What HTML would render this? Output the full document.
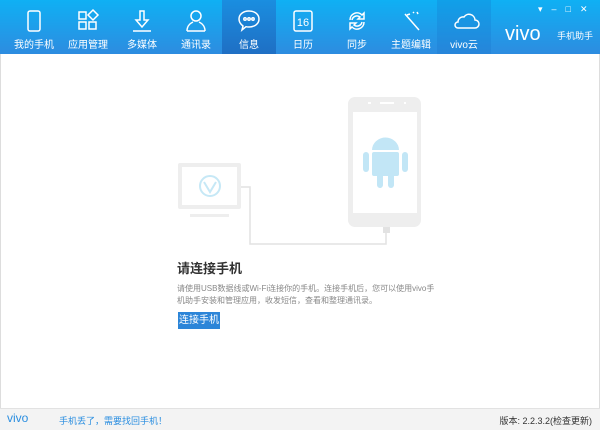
<!DOCTYPE html><html><head><meta charset="utf-8"><style>
body{margin:0;width:600px;height:429px;overflow:hidden;font-family:"Liberation Sans","Noto Sans CJK SC",sans-serif;background:#fff;position:relative}
.hd{position:absolute;left:0;top:0;width:600px;height:54px;background:linear-gradient(#0fb0f4,#2d8ce0)}
.t{position:absolute;top:0;width:54px;height:54px;text-align:center;color:#fff;font-size:10px}
.t span{position:absolute;left:0;right:0;top:36px}
.t svg{position:absolute;left:15px;top:8px}
.act{background:linear-gradient(#1a8ee0,#1f6fc4)}
.act2{background:rgba(20,110,200,0.25)}
.body{position:absolute;left:0;top:54px;width:598px;height:354px;border:1px solid #ddd;border-top:none}
.ft{position:absolute;left:0;top:408px;width:600px;height:21px;background:#f3f3f3;border-top:1px solid #e2e2e2;font-size:9px}
</style></head><body>
<div class="hd">
<div class="t" style="left:7px"><svg width="24" height="26" viewBox="0 0 24 26" fill="none" stroke="#fff" stroke-width="1.5"><rect x="6" y="3" width="12" height="20" rx="2"/></svg><span>我的手机</span></div>
<div class="t" style="left:61px"><svg width="24" height="26" viewBox="0 0 24 26" fill="none" stroke="#fff" stroke-width="1.5"><rect x="3" y="4" width="7" height="7"/><path d="M17 2l5 5-5 5-5-5z"/><rect x="3" y="14" width="7" height="7"/><rect x="13" y="14" width="7" height="7"/></svg><span>应用管理</span></div>
<div class="t" style="left:115px"><svg width="24" height="26" viewBox="0 0 24 26" fill="none" stroke="#fff" stroke-width="1.5"><path d="M10 3h4v9h4l-6 7-6-7h4z"/><path d="M3 23h18"/></svg><span>多媒体</span></div>
<div class="t" style="left:169px"><svg width="24" height="26" viewBox="0 0 24 26" fill="none" stroke="#fff" stroke-width="1.5"><circle cx="12" cy="8" r="5"/><path d="M3 23c0-6 4-8 6-9M21 23c0-6-4-8-6-9M3 23h18"/></svg><span>通讯录</span></div>
<div class="t act" style="left:222px"><svg width="24" height="26" viewBox="0 0 24 26" fill="none" stroke="#fff" stroke-width="1.5"><path d="M12 3c6 0 10 3.5 10 8s-4 8-10 8c-1 0-2 0-3-.3L5 22l1-4c-2-1.5-4-4-4-7 0-4.5 4-8 10-8z"/><circle cx="8" cy="11" r="1.2"/><circle cx="12" cy="11" r="1.2"/><circle cx="16" cy="11" r="1.2"/></svg><span>信息</span></div>
<div class="t" style="left:276px"><svg width="24" height="26" viewBox="0 0 24 26" fill="none" stroke="#fff" stroke-width="1.5"><rect x="3" y="3" width="18" height="20" rx="2"/><text x="12" y="18" fill="#fff" stroke="none" font-size="11" text-anchor="middle" font-family="Liberation Sans">16</text></svg><span>日历</span></div>
<div class="t" style="left:330px"><svg width="24" height="26" viewBox="0 0 24 26" fill="none" stroke="#fff" stroke-width="1.5"><path d="M5 12a7 7 0 0 1 12-5l2-2v6h-6l2-2a5 5 0 0 0-8 3M19 14a7 7 0 0 1-12 5l-2 2v-6h6l-2 2a5 5 0 0 0 8-3"/></svg><span>同步</span></div>
<div class="t" style="left:384px"><svg width="24" height="26" viewBox="0 0 24 26" fill="none" stroke="#fff" stroke-width="1.5"><path d="M6 6l14 16M8 7l3-1M14 4l1 1M18 4l1 2"/></svg><span>主题编辑</span></div>
<div class="t act2" style="left:437px"><svg width="28" height="26" viewBox="0 0 28 26" fill="none" stroke="#fff" stroke-width="1.5"><path d="M6 20h17a4 4 0 0 0 0-8 6 6 0 0 0-11-3 5 5 0 0 0-6 5 3 3 0 0 0 0 6z"/></svg><span>vivo云</span></div>
<div style="position:absolute;left:505px;top:23px;color:#fff;font-size:20px">vivo</div>
<div style="position:absolute;left:557px;top:29px;color:#fff;font-size:9px">手机助手</div>
<div style="position:absolute;left:538px;top:4px;color:#fff;font-size:9px;letter-spacing:9px">▾–□✕</div>
</div>
<div class="body"></div>
<svg style="position:absolute;left:0;top:0" width="600" height="429">
<rect x="348" y="97" width="73" height="130" rx="7" fill="#eeeeee"/>
<rect x="353" y="112" width="64" height="101" fill="#fff"/>
<rect x="368" y="102" width="3" height="2" fill="#fff"/><rect x="380" y="102" width="14" height="2" fill="#fff"/><rect x="404" y="102" width="2" height="2" fill="#fff"/>
<rect x="178" y="163" width="63" height="46" rx="2" fill="#eeeeee"/>
<rect x="182" y="167" width="55" height="38" fill="#fff"/>
<rect x="190" y="214" width="39" height="3" fill="#eeeeee"/>
<circle cx="210" cy="186" r="10" fill="none" stroke="#c6e8f6" stroke-width="2"/>
<path d="M204 182l6 10 6-10" fill="none" stroke="#c6e8f6" stroke-width="2"/>
<path d="M241 187h9v57h136v-11" fill="none" stroke="#e2e2e2" stroke-width="1.5"/>
<rect x="383" y="227" width="7" height="6" fill="#e2e2e2"/>
<g fill="#c2e6f6"><path d="M372 150a13 12 0 0 1 27 0z"/><rect x="372" y="152" width="27" height="24" rx="2"/><rect x="363" y="152" width="6" height="20" rx="3"/><rect x="402" y="152" width="6" height="20" rx="3"/><rect x="377" y="172" width="6" height="16" rx="3"/><rect x="388" y="172" width="6" height="16" rx="3"/></g>
</svg>
<div style="position:absolute;left:177px;top:258px;font-size:13px;font-weight:bold;color:#333">请连接手机</div>
<div style="position:absolute;left:177px;top:283px;width:260px;font-size:8px;line-height:12px;color:#888">请使用USB数据线或Wi-Fi连接你的手机。连接手机后，您可以使用vivo手机助手安装和管理应用，收发短信，查看和整理通讯录。</div>
<div style="position:absolute;left:178px;top:312px;width:42px;height:17px;background:#2c85d8;color:#fff;font-size:10px;line-height:17px;text-align:center">连接手机</div>
<div class="ft">
<div style="position:absolute;left:7px;top:2px;color:#2a8ee0;font-size:12px">vivo</div>
<div style="position:absolute;left:59px;top:5px;color:#2a8ee0">手机丢了，需要找回手机！</div>
<div style="position:absolute;right:8px;top:5px;color:#333">版本: 2.2.3.2(检查更新)</div>
</div>
</body></html>
